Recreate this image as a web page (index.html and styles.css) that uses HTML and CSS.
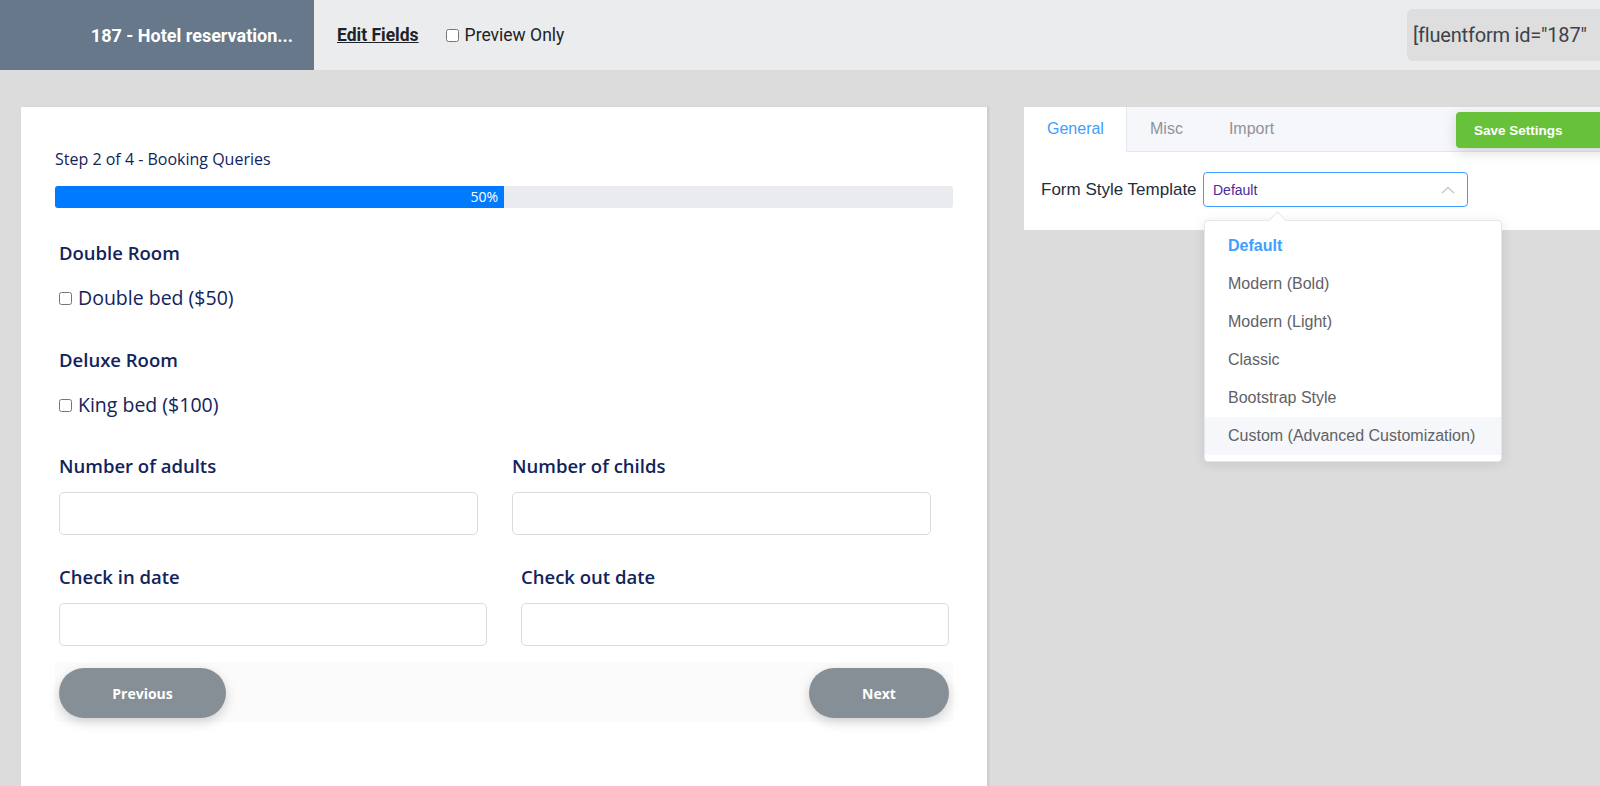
FILE: index.html
```html
<html>
	<head>
		<title>Form Settings</title>
		<link rel="stylesheet" href="styles.css">
	</head>
	<body>
		<div class='topbar'>
			<div class='form-title'>187 - Hotel reservation...</div>
			<a class='edit-link' href='#'>Edit Fields</a>
			<label class='preview'><input type='checkbox'> Preview Only</label>
			<div class='shortcode'>[fluentform id="187"</div>
		</div>
		<div class='workspace'>
			<div class='form-card'>
				<div class='step-title'>Step 2 of 4 - Booking Queries</div>
				<div class='progress'><div class='progress-fill' style='width:50%'>50%</div></div>

				<div class='field'>
					<div class='label'>Double Room</div>
					<label class='check'><input type='checkbox'> Double bed ($50)</label>
				</div>
				<div class='field'>
					<div class='label'>Deluxe Room</div>
					<label class='check'><input type='checkbox'> King bed ($100)</label>
				</div>

				<div class='cols cols-a'>
					<div class='field'>
						<div class='label'>Number of adults</div>
						<input class='text' type='text'>
					</div>
					<div class='field'>
						<div class='label'>Number of childs</div>
						<input class='text' type='text'>
					</div>
				</div>
				<div class='cols cols-b'>
					<div class='field'>
						<div class='label'>Check in date</div>
						<input class='text' type='text'>
					</div>
					<div class='field'>
						<div class='label'>Check out date</div>
						<input class='text' type='text'>
					</div>
				</div>

				<div class='step-nav'>
					<button class='btn-step'>Previous</button>
					<button class='btn-step btn-next'>Next</button>
				</div>
			</div>

			<div class='settings'>
				<div class='tabs'>
					<div class='tab active'>General</div>
					<div class='tab'>Misc</div>
					<div class='tab'>Import</div>
				</div>
				<button class='btn-save'>Save Settings</button>
				<div class='setting-row'>
					<span class='setting-label'>Form Style Template</span>
					<div class='select'>
						<span>Default</span>
						<svg class='caret' width='14' height='8' viewBox='0 0 14 8'><path d='M1 7 L7 1.5 L13 7' fill='none' stroke='#c0c4cc' stroke-width='1.2'/></svg>
					</div>
				</div>
				<ul class='dropdown'>
					<li class='selected'>Default</li>
					<li>Modern (Bold)</li>
					<li>Modern (Light)</li>
					<li>Classic</li>
					<li>Bootstrap Style</li>
					<li class='hover'>Custom (Advanced Customization)</li>
				</ul>
			</div>
		</div>
	</body>
</html>
```

FILE: styles.css
```css
body{
	margin:0;
	background:#dcdcdc;
	font-family:"Liberation Sans",Arial,sans-serif;
	overflow:hidden;
	height:786px;
}
.topbar{
	display:flex;
	align-items:center;
	height:70px;
	background:#ebecee;
	color:#1d2327;
}
.form-title{
	width:314px;
	height:100%;
	flex-shrink:0;
	box-sizing:border-box;
	padding-right:21px;
	background:#66788a;
	color:#fff;
	font-family:Roboto,sans-serif;
	font-weight:700;
	font-size:18px;
	display:flex;
	align-items:center;
	justify-content:flex-end;
}
.edit-link{
	margin-left:23px;
	color:#1d2327;
	font-family:Roboto,sans-serif;
	font-weight:700;
	font-size:17.5px;
}
.preview{
	margin-left:27px;
	font-family:Roboto,sans-serif;
	font-size:17.5px;
	display:flex;
	align-items:center;
}
.preview input{
	margin:0 6px 0 0;
	width:13px;height:13px;
}
.shortcode{
	margin-left:auto;
	width:193px;
	box-sizing:border-box;
	height:52px;
	line-height:52px;
	padding-left:6px;
	background:#dedede;
	border-radius:6px 0 0 6px;
	color:#3c434a;
	font-family:Roboto,sans-serif;
	font-size:20px;
	letter-spacing:-0.2px;
	white-space:nowrap;
	overflow:hidden;
}
.workspace{
	display:flex;
	align-items:flex-start;
	gap:37px;
	padding:37px 0 0 21px;
}
.form-card{
	width:966px;
	min-height:700px;
	box-sizing:border-box;
	padding:41px 34px 0;
	background:#fff;
	box-shadow:2px 0 2px rgba(0,0,0,.08);
	font-family:"Open Sans",sans-serif;
	color:#13235b;
}
.step-title{
	font-size:16px;
	line-height:22px;
}
.progress{
	margin-top:16px;
	width:898px;
	height:22px;
	background:#e9ebef;
	border-radius:3px;
	overflow:hidden;
}
.progress-fill{
	height:100%;
	background:#007bff;
	color:#fff;
	font-size:14px;
	line-height:22px;
	text-align:right;
	box-sizing:border-box;
	padding-right:6px;
}
.field{
	padding-left:4px;
	margin-top:33px;
}
.field + .field{
	margin-top:38px;
}
.label{
	font-size:18.5px;
	font-weight:600;
	line-height:24px;
}
.check{
	display:flex;
	align-items:center;
	margin-top:21px;
	font-size:19.5px;
	line-height:24px;
}
.check input{
	margin:0 6px 0 0;
	width:13px;height:13px;
}
.cols{
	display:grid;
	gap:34px;
}
.cols .field,
.cols .field + .field{
	margin-top:0;
	padding-left:0;
}
.cols-a{
	grid-template-columns:419px 419px;
	margin:37px 0 0 4px;
}
.cols-b{
	grid-template-columns:428px 428px;
	margin:30px 0 0 4px;
}
.text{
	display:block;
	margin-top:14px;
	width:100%;
	height:43px;
	box-sizing:border-box;
	border:1px solid #dadbdd;
	border-radius:5px;
	background:#fff;
}
.step-nav{
	display:flex;
	justify-content:space-between;
	width:898px;
	margin-top:16px;
	padding:6px 0 4px 4px;
	box-sizing:border-box;
	background:#fbfbfb;
}
.btn-step{
	height:50px;
	width:167px;
	border:0;
	border-radius:25px;
	background:#868e96;
	color:#fff;
	font-family:"Open Sans",sans-serif;
	font-weight:700;
	font-size:14px;
	box-shadow:0 4px 12px rgba(0,0,0,.18);
}
.btn-next{
	width:140px;
	margin-right:4px;
}
.settings{
	position:relative;
	width:576px;
	height:123px;
	background:#fff;
	font-family:"Liberation Sans",Arial,sans-serif;
}
.tabs{
	display:flex;
	height:44px;
	background:#f5f7fa;
	border-bottom:1px solid #e4e7ed;
}
.tab{
	padding:0 23px;
	line-height:44px;
	font-size:16px;
	color:#909399;
}
.tab.active{
	width:103px;
	box-sizing:border-box;
	background:#fff;
	color:#409eff;
	border-right:1px solid #e4e7ed;
	height:45px;
}
.btn-save{
	position:absolute;
	left:432px;
	top:5px;
	width:160px;
	height:36px;
	padding-left:18px;
	text-align:left;
	border:0;
	border-radius:4px;
	background:#67c23a;
	color:#fff;
	font-family:"Liberation Sans",Arial,sans-serif;
	font-weight:700;
	font-size:13.5px;
	box-shadow:0 4px 14px rgba(0,0,0,.15);
}
.setting-row{
	display:flex;
	align-items:center;
	gap:5px;
	padding:20px 0 0 17px;
}
.setting-label{
	width:157px;
	font-size:17px;
	color:#1f2d3d;
	white-space:nowrap;
}
.select{
	display:flex;
	align-items:center;
	justify-content:space-between;
	width:265px;
	height:35px;
	box-sizing:border-box;
	padding:0 12px 0 9px;
	border:1px solid #409eff;
	border-radius:4px;
	font-size:14px;
	color:#4b2a9b;
}
.dropdown{
	position:absolute;
	left:180px;
	top:113px;
	width:298px;
	margin:0;
	padding:6px 0;
	list-style:none;
	background:#fff;
	border:1px solid #e4e7ed;
	border-radius:4px;
	box-shadow:0 2px 12px rgba(0,0,0,.1);
	box-sizing:border-box;
}
.dropdown:before{
	content:'';
	position:absolute;
	left:66px;
	top:-7px;
	width:12px;height:12px;
	background:#fff;
	border-left:1px solid #e4e7ed;
	border-top:1px solid #e4e7ed;
	transform:rotate(45deg);
}
.dropdown li{
	height:38px;
	line-height:38px;
	padding:0 23px;
	font-size:16px;
	color:#606266;
	white-space:nowrap;
}
.dropdown li.selected{
	color:#409eff;
	font-weight:700;
}
.dropdown li.hover{
	background:#f5f7fa;
}
```
